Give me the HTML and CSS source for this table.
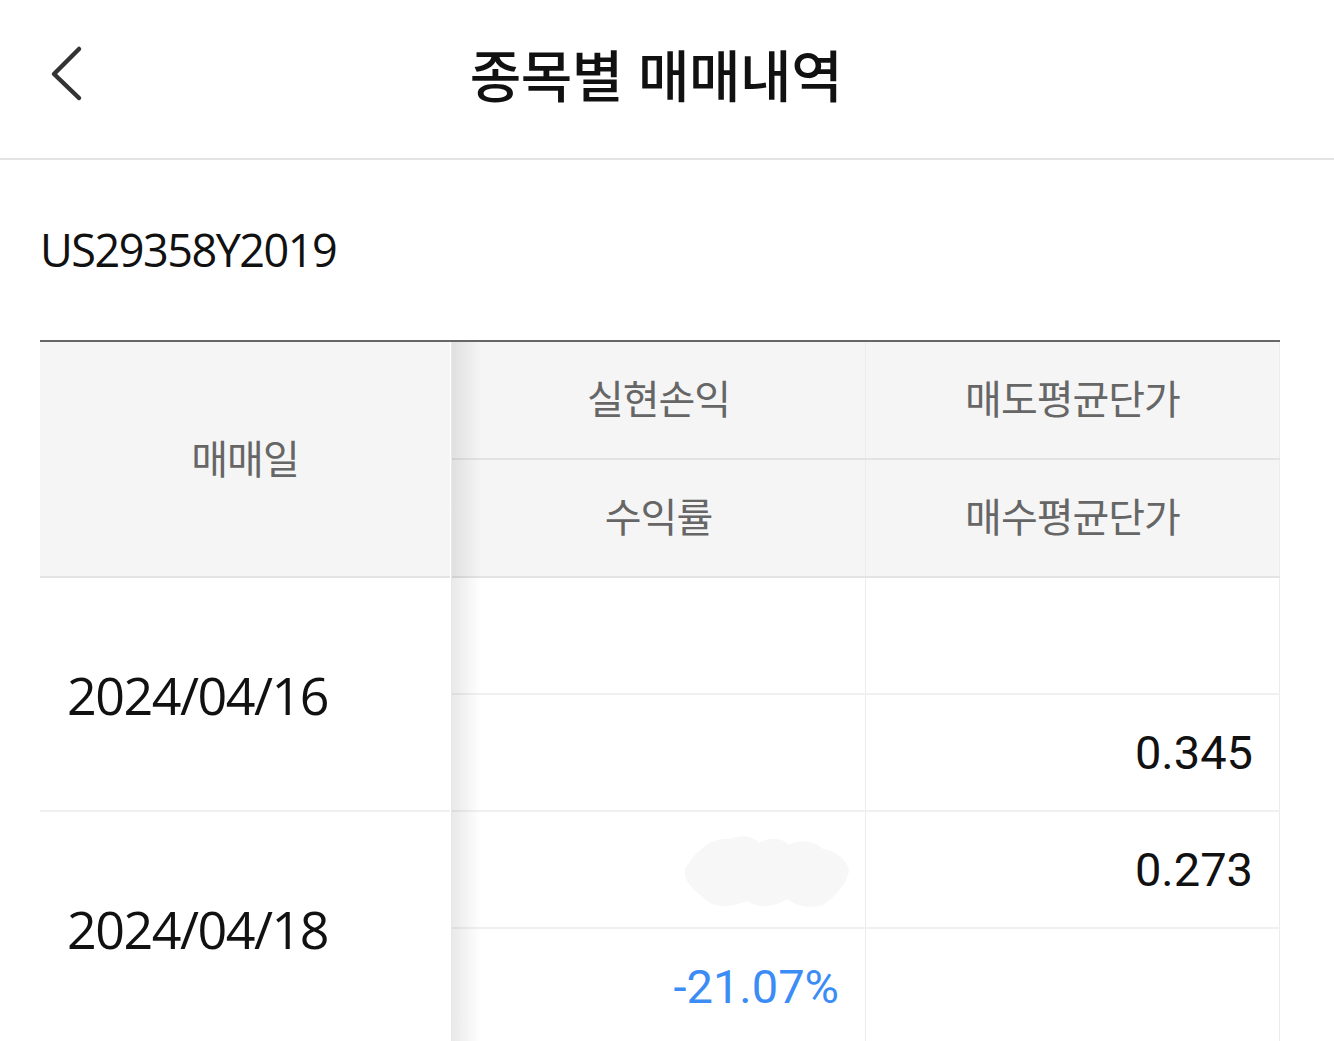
FILE: index.html
```html
<!DOCTYPE html>
<html lang="ko">

<head>
  <meta charset="UTF-8" />
  <meta name="viewport" content="width=device-width, initial-scale=1.0" />
  <title>종목별 매매내역</title>
  <link rel="stylesheet" href="styles.css">
</head>

<body>
  <div class="topbar">
    <a class="back-btn" href="#">
      <svg width="40" height="60" viewBox="0 0 40 60">
        <path d="M29 6 L4 31 L29 55" fill="none" stroke="#333" stroke-width="4.5" stroke-linecap="round" stroke-linejoin="round" />
      </svg>
    </a>
    <h1>종목별 매매내역</h1>
    <div></div>
  </div>

  <div class="content">
    <p class="isin">US29358Y2019</p>

    <div class="trade-table">
      <!-- header -->
      <div class="group head">
        <div class="date-cell">매매일</div>
        <div class="cols">
          <div class="sub">
            <div class="cell">실현손익</div>
            <div class="cell">매도평균단가</div>
          </div>
          <div class="sub">
            <div class="cell">수익률</div>
            <div class="cell">매수평균단가</div>
          </div>
        </div>
      </div>

      <div class="group">
        <div class="date-cell">2024/04/16</div>
        <div class="cols">
          <div class="sub">
            <div class="cell num"></div>
            <div class="cell num"></div>
          </div>
          <div class="sub">
            <div class="cell num"></div>
            <div class="cell num">0.345</div>
          </div>
        </div>
      </div>

      <div class="group">
        <div class="date-cell">2024/04/18</div>
        <div class="cols">
          <div class="sub">
            <div class="cell num hidden-val">
              <svg width="172" height="82" viewBox="0 0 172 82">
                <path d="M8 34 C 18 18, 34 8, 50 10 C 58 6, 70 6, 78 14 C 88 8, 100 8, 108 16 C 118 10, 134 12, 142 20 C 154 22, 166 30, 168 42 C 166 54, 156 66, 142 76 C 130 80, 116 78, 106 70 C 94 78, 78 80, 66 72 C 52 78, 34 80, 24 70 C 14 62, 2 52, 4 42 C 4 38, 6 36, 8 34 Z" fill="#f7f7f7" />
              </svg>
            </div>
            <div class="cell num">0.273</div>
          </div>
          <div class="sub">
            <div class="cell num loss">-21.07%</div>
            <div class="cell num"></div>
          </div>
        </div>
      </div>
    </div>
  </div>
</body>

</html>
```

FILE: styles.css
```css
* {
  box-sizing: border-box;
  margin: 0;
  padding: 0;
}

body {
  background-color: #fff;
  color: #111;
  font-family: 'Noto Sans CJK KR', 'Noto Sans', sans-serif;
  overflow: hidden;
}

.topbar {
  display: grid;
  grid-template-columns: 1fr auto 1fr;
  align-items: center;
  height: 160px;
  border-bottom: 2px solid #e3e3e3;
}

.back-btn {
  display: flex;
  align-items: center;
  padding-left: 50px;
  padding-bottom: 12px;
}

.topbar h1 {
  font-size: 56px;
  font-weight: 500;
  letter-spacing: -0.5px;
  color: #111;
  padding-right: 22px;
  padding-bottom: 14px;
}

.content {
  padding: 0 54px 0 40px;
}

.isin {
  font-family: 'Open Sans', 'Noto Sans', sans-serif;
  font-size: 45px;
  line-height: 60px;
  letter-spacing: -1.5px;
  padding-top: 60px;
  color: #111;
}

.trade-table {
  margin-top: 60px;
  border-top: 2px solid #666;
}

.group {
  display: flex;
}

.date-cell {
  position: relative;
  width: 410px;
  flex-shrink: 0;
  display: flex;
  align-items: center;
  padding-left: 27px;
  font-family: 'Open Sans', 'Noto Sans', sans-serif;
  font-size: 52px;
  letter-spacing: -1.5px;
  color: #111;
  border-bottom: 2px solid #f0f0f0;
  margin-right: 2px;
}

/* fixed column shadow */
.date-cell::after {
  content: '';
  position: absolute;
  top: 0;
  bottom: -2px;
  left: 100%;
  width: 30px;
  margin-left: 1px;
  background: linear-gradient(to right, rgba(0, 0, 0, 0.09), rgba(0, 0, 0, 0));
  z-index: 2;
}

.cols {
  flex: 1;
}

.sub {
  display: grid;
  grid-template-columns: 1fr 1fr;
  height: 117px;
  border-bottom: 2px solid #f0f0f0;
}

.head .sub {
  height: 118px;
}

.cell {
  min-width: 0;
  display: flex;
  align-items: center;
  justify-content: center;
  border-right: 1px solid #ececec;
  font-size: 40px;
  letter-spacing: -1px;
  color: #666;
}

.head .date-cell,
.head .sub {
  background: #f5f5f5;
  border-bottom-color: #e3e3e3;
}

.head .date-cell {
  justify-content: center;
  padding-left: 0;
  padding-bottom: 4px;
  font-family: 'Noto Sans CJK KR', sans-serif;
  font-size: 40px;
  letter-spacing: -1px;
  color: #666;
}

.head .cell {
  padding-bottom: 6px;
}

.cell.num {
  justify-content: flex-end;
  padding-right: 26px;
  font-family: Roboto, 'Noto Sans', sans-serif;
  font-size: 47px;
  letter-spacing: 0;
  color: #111;
}

.cell.loss {
  color: #3b8cf5;
}

.cell.hidden-val {
  padding-right: 12px;
}

.cell.hidden-val svg {
  flex-shrink: 0;
}
```
